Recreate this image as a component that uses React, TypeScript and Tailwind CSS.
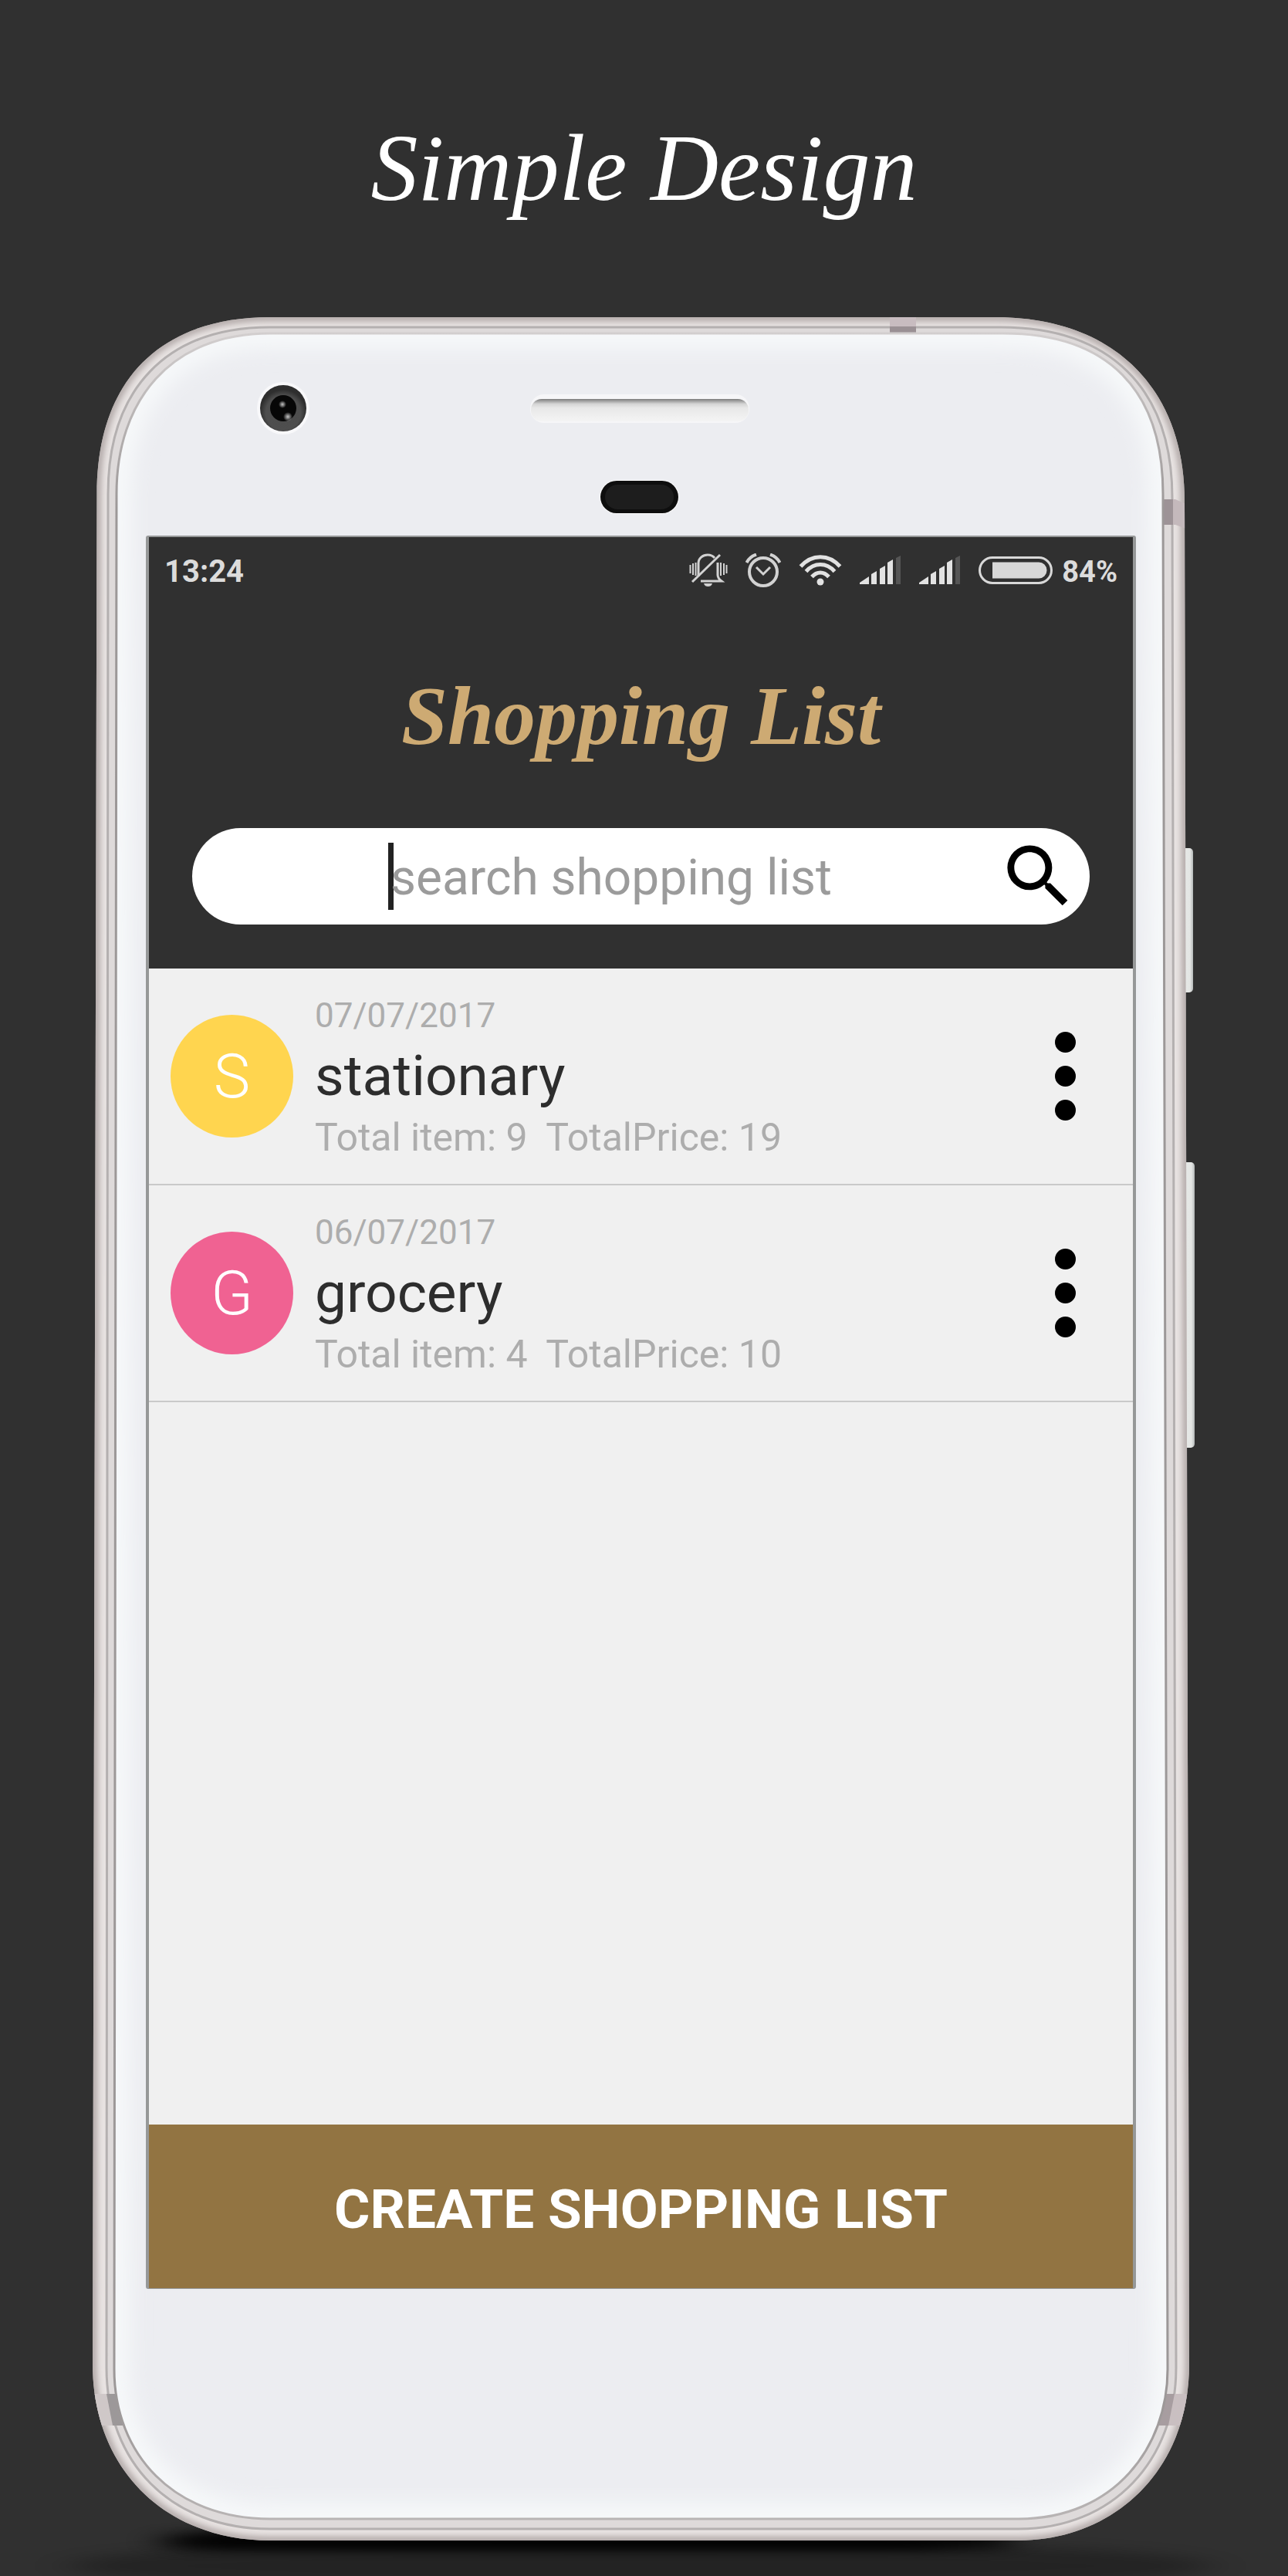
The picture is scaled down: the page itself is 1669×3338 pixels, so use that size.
import React from "react";

type ShoppingList = {
  id: string;
  date: string;
  name: string;
  items: number;
  price: number;
  initial: string;
  tone: string;
};

const lists: ShoppingList[] = [
  { id: "stationary", date: "07/07/2017", name: "stationary", items: 9, price: 19, initial: "S", tone: "bg-[#ffd54f]" },
  { id: "grocery", date: "06/07/2017", name: "grocery", items: 4, price: 10, initial: "G", tone: "bg-[#f06292]" },
];

const OUTER =
  "M125.5 640C125.5 490 210 411 350 411H1290C1440 411 1535 500 1535 650L1541 3063C1541 3205 1440 3292 1320 3292H350C215 3292 120 3200 120 3063Z";
const MIDDLE =
  "M140 640C140 505 215 424 350 424H1297C1437 424 1519 502 1519 645L1524 3068C1524 3188 1442 3277 1320 3277H350C220 3277 138 3190 138 3068Z";
const INNER =
  "M151 640C151 520 220 432 350 432H1300C1435 432 1507 505 1507 640L1513 3070C1513 3170 1445 3264 1320 3264H350C225 3264 148 3180 148 3070Z";

function PhoneBody() {
  return (
    <svg
      className="absolute inset-0 h-full w-full overflow-visible"
      viewBox="120 411 1421 2881"
      preserveAspectRatio="none"
      aria-hidden="true"
    >
      <defs>
        <clipPath id="outerClip"><path d={OUTER} /></clipPath>
        <clipPath id="innerClip"><path d={INNER} /></clipPath>
        <clipPath id="bandClip"><path clipRule="evenodd" d={OUTER + INNER} /></clipPath>
        <filter id="soft8" x="-10%" y="-10%" width="120%" height="120%"><feGaussianBlur stdDeviation="4" /></filter>
        <filter id="soft20" x="-10%" y="-10%" width="120%" height="120%"><feGaussianBlur stdDeviation="14" /></filter>
        <filter id="floor" x="-20%" y="-300%" width="140%" height="700%"><feGaussianBlur stdDeviation="26 8" /></filter>
        <linearGradient id="sideKey" x1="0" x2="1" y1="0" y2="0">
          <stop offset="0" stopColor="#c4c6c6" />
          <stop offset="0.35" stopColor="#e6e8e6" />
          <stop offset="0.75" stopColor="#e4e6e4" />
          <stop offset="1" stopColor="#b4b8b8" />
        </linearGradient>
        <linearGradient id="innerEdge" x1="0" x2="0" y1="0" y2="1">
          <stop offset="0" stopColor="#d2cece" />
          <stop offset="0.08" stopColor="#9c9898" />
          <stop offset="0.95" stopColor="#9c9898" />
          <stop offset="1" stopColor="#b8b4b4" />
        </linearGradient>
        <radialGradient id="lens" cx="0.5" cy="0.6" r="0.5">
          <stop offset="0" stopColor="#4c4c4c" />
          <stop offset="0.75" stopColor="#4e4e4e" />
          <stop offset="1" stopColor="#2e2e2e" />
        </radialGradient>
        <radialGradient id="glint">
          <stop offset="0" stopColor="#c8c8c8" />
          <stop offset="1" stopColor="#c8c8c8" stopOpacity="0" />
        </radialGradient>
        <linearGradient id="speaker" x1="0" x2="0" y1="0" y2="1">
          <stop offset="0" stopColor="#7c7c7c" />
          <stop offset="0.22" stopColor="#d4d4d4" />
          <stop offset="0.4" stopColor="#e8e8e8" />
          <stop offset="1" stopColor="#f4f4f4" />
        </linearGradient>
      </defs>

      <ellipse cx="830" cy="3325" rx="740" ry="34" fill="#000" opacity="0.25" filter="url(#floor)" />
      <rect x="215" y="3284" width="1090" height="18" fill="#000" filter="url(#floor)" />
      <rect x="260" y="3284" width="960" height="16" fill="#000" filter="url(#floor)" />

      <rect x="1530" y="1099" width="16" height="187" rx="5" fill="url(#sideKey)" />
      <rect x="1532" y="1506" width="16" height="370" rx="5" fill="url(#sideKey)" />

      <path d={OUTER} fill="#e8e3e2" />
      <g clipPath="url(#outerClip)">
        <path d={OUTER} fill="none" stroke="#a89f9e" strokeWidth="9" filter="url(#soft8)" />
      </g>
      <path d={MIDDLE} fill="#dedada" stroke="#b4b0b0" strokeWidth="3" />
      <g clipPath="url(#bandClip)">
        <rect x="1153" y="411" width="34" height="12" fill="#c8bcc0" />
        <rect x="1153" y="423" width="34" height="9" fill="#9a9094" />
        <path d="M1507 647h16l14 6v32l-14-5h-16z" fill="#c4b9bc" />
        <rect x="1507" y="647" width="13" height="33" fill="#9d9397" />
        <rect x="1500" y="3102" width="45" height="41" fill="#c9bfc1" />
        <path d="M1512 3102h10l-8 41h-14z" fill="#a79da0" />
        <rect x="118" y="3102" width="45" height="41" fill="#cfc8c8" />
        <path d="M138 3102h14l10 41h-16z" fill="#9c9899" />
      </g>

      <path d={INNER} fill="#ecedf1" />
      <g clipPath="url(#innerClip)">
        <path d={INNER} fill="none" stroke="#f8fafb" strokeWidth="34" filter="url(#soft20)" />
      </g>
      <path d={INNER} fill="none" stroke="url(#innerEdge)" strokeWidth="3" />

      <circle cx="367" cy="529" r="34" fill="#f8f8fa" />
      <circle cx="367" cy="529" r="30" fill="url(#lens)" />
      <circle cx="367" cy="529" r="17" fill="#070707" />
      <circle cx="366" cy="524" r="5" fill="url(#glint)" />
      <circle cx="373" cy="540" r="6" fill="url(#glint)" />

      <rect x="687" y="511" width="284" height="37" rx="18" fill="#f6f6f8" />
      <rect x="688" y="517" width="282" height="29" rx="14" fill="url(#speaker)" />
      <rect x="777" y="622" width="103" height="44" rx="22" fill="#fafafa" />
      <rect x="778" y="623" width="101" height="42" rx="21" fill="#0e0e0e" />
      <rect x="784" y="628" width="89" height="32" rx="16" fill="#1d1d1d" />
    </svg>
  );
}

function MutedBellIcon() {
  return (
    <svg className="h-11 w-[50px]" viewBox="0 0 50 44" fill="none" stroke="#d2d2d2" strokeWidth="3" aria-hidden="true">
      <path d="M12 30V13C12 6 18 2 24 2c4 0 7 1.500 9 4M37 12v16c0 3 1 5 5 8H15" />
      <path d="M4 37 40 2" />
      <path d="M19 39h11c-1 3-3 4-5.500 4s-4.500-1-5.500-4z" fill="#d2d2d2" stroke="none" />
      <path d="M1.500 15v11M5 13v15M8.500 12v17M41 12v17M45 13v15M48.500 15v11" strokeWidth="2" />
    </svg>
  );
}

function AlarmIcon() {
  return (
    <svg className="h-11 w-[46px]" viewBox="0 0 46 44" fill="none" stroke="#d2d2d2" strokeWidth="4" aria-hidden="true">
      <circle cx="23" cy="24" r="18" />
      <path d="M14 18l9 9 9-9" strokeWidth="3" />
      <path d="M1.500 12C4 7 8 3.500 14 1.500M44.500 12C42 7 38 3.500 32 1.500" />
    </svg>
  );
}

function WifiIcon() {
  return (
    <svg className="h-10 w-14" viewBox="0 0 56 40" fill="none" stroke="#e2e2e2" strokeWidth="5" aria-hidden="true">
      <path d="M2.500 15C17-1.500 39-1.500 53.500 15" />
      <path d="M9.500 21.500C20 9.500 36 9.500 46.500 21.500" />
      <path d="M17 28.500C23.500 21 32.500 21 39 28.500" />
      <circle cx="28" cy="35" r="4.500" fill="#e2e2e2" stroke="none" />
    </svg>
  );
}

function SignalIcon() {
  return (
    <svg className="h-[38px] w-[54px]" viewBox="0 0 54 38" fill="#e2e2e2" aria-hidden="true">
      <path d="M0 37V35L12 27V37ZM15 37V24L22 20V37ZM26 37V17L33 13V37ZM36 37V9L43 5V37Z" />
      <path d="M47 37V3L53 0V37Z" fill="#555" />
    </svg>
  );
}

function BatteryIcon() {
  return (
    <svg className="h-9 w-24" viewBox="0 0 96 36" fill="none" aria-hidden="true">
      <rect x="1.500" y="1.500" width="93" height="33" rx="16.500" stroke="#d8d8d8" strokeWidth="3" />
      <path d="M18 7.500h60a10.500 10.500 0 0 1 0 21H18z" fill="#d8d8d8" />
    </svg>
  );
}

function StatusBar() {
  return (
    <div className="flex h-[86px] items-center justify-between px-5 leading-[44px] font-bold text-[#dcdcdc]">
      <time className="pt-1 text-[40px]">13:24</time>
      <div className="flex items-center">
        <div className="flex items-center gap-[23px]">
          <MutedBellIcon />
          <AlarmIcon />
          <WifiIcon />
          <SignalIcon />
          <SignalIcon />
          <BatteryIcon />
        </div>
        <span className="pt-1 pl-3 text-[38px]">84%</span>
      </div>
    </div>
  );
}

function SearchBar() {
  return (
    <form role="search" className="mx-14 flex h-[125px] items-center rounded-full bg-white pr-[13px]" onSubmit={(e) => e.preventDefault()}>
      <div className="flex flex-1 items-center justify-center pl-10">
        <span className="h-[87px] w-[7px] bg-[#222]" aria-hidden="true" />
        <input
          type="text"
          aria-label="Search shopping list"
          placeholder="search shopping list"
          className="-ml-1 field-sizing-content pt-1 text-[64px] leading-[76px] text-[#222] outline-none placeholder:text-[#9b9b9b]"
        />
      </div>
      <button type="submit" aria-label="Search" className="size-[107px]">
        <svg viewBox="0 0 24 24" className="size-full" fill="#000" aria-hidden="true">
          <path d="M15.500 14h-.79l-.28-.27A6.471 6.471 0 0 0 16 9.500 6.500 6.500 0 1 0 9.500 16c1.610 0 3.090-.59 4.230-1.570l.27.28v.79l5 4.990L20.490 19l-4.990-5zm-6 0C7.010 14 5 11.990 5 9.500S7.010 5 9.500 5 14 7.010 14 9.500 11.990 14 9.500 14z" />
        </svg>
      </button>
    </form>
  );
}

function ListRow({ list }: { list: ShoppingList }) {
  return (
    <li className="flex h-[281px] items-center border-b-2 border-[#c9c9c9] pl-7">
      <div className={"flex size-[159px] shrink-0 items-center justify-center rounded-full text-[80px] font-light text-white " + list.tone}>
        {list.initial}
      </div>
      <div className="flex-1 pt-0.5 pl-7">
        <p className="text-[44px] leading-[60px] text-[#adadad]">{list.date}</p>
        <h2 className="text-[73px] leading-[96px] text-[#2d2d2d]">{list.name}</h2>
        <p className="text-[50px] leading-[64px] whitespace-pre text-[#adadad]">
          {`Total item: ${list.items}  TotalPrice: ${list.price}`}
        </p>
      </div>
      <button type="button" aria-label={`Options for ${list.name}`} className="mr-16 flex w-12 flex-col items-center gap-[17px]">
        <span className="size-[27px] rounded-full bg-black" />
        <span className="size-[27px] rounded-full bg-black" />
        <span className="size-[27px] rounded-full bg-black" />
      </button>
    </li>
  );
}

export default function App() {
  return (
    <div className="overflow-hidden bg-[#303030] pb-[46px] font-[Roboto,sans-serif]">
      <h1 className="h-[411px] pt-[148px] text-center font-['Liberation_Serif',serif] text-[122px] leading-[140px] text-white italic">
        Simple Design
      </h1>
      <main className="relative mr-32 ml-[120px] px-[69px] pt-[283px] pb-[326px]">
        <PhoneBody />
        <section className="relative rounded-[3px] border-x-4 border-t-2 border-b border-[#969898] bg-[#f0f0f0]">
          <header className="bg-[#303030] pb-[57px]">
            <StatusBar />
            <h2 className="pt-[81px] pb-20 text-center font-['Liberation_Serif',serif] text-[108px] leading-[130px] font-bold text-[#cdaa73] italic">
              Shopping List
            </h2>
            <SearchBar />
          </header>
          <ul className="min-h-[1498px]">
            {lists.map((list) => (
              <ListRow key={list.id} list={list} />
            ))}
          </ul>
          <button type="button" className="block h-[212px] w-full bg-[#927442] pt-2 text-[71px] font-bold text-white">
            CREATE SHOPPING LIST
          </button>
        </section>
      </main>
    </div>
  );
}
